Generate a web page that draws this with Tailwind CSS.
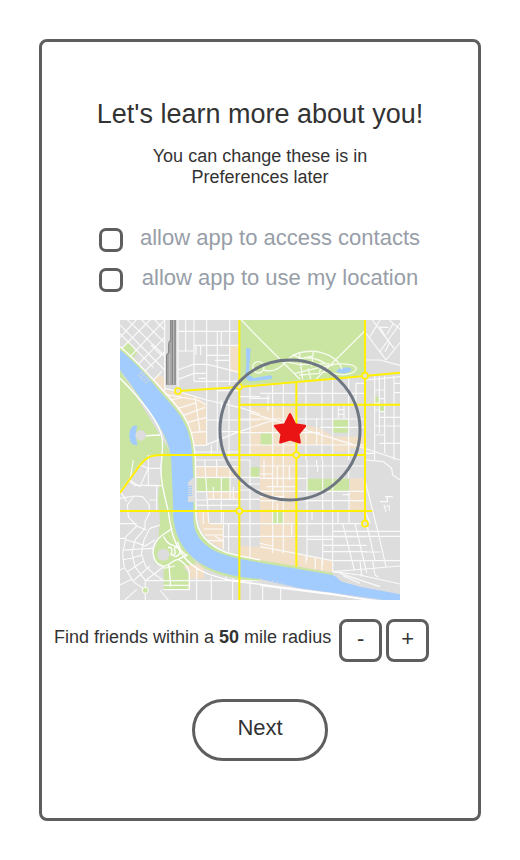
<!DOCTYPE html>
<html lang="en">
<head>
<meta charset="utf-8">
<meta name="viewport" content="width=device-width, initial-scale=1">
<title>Let's learn more about you!</title>
<script src="https://cdn.jsdelivr.net/npm/@tailwindcss/browser@4"></script>
</head>
<body class="min-h-screen flex bg-white p-[39px] font-['Liberation_Sans',Arial,sans-serif] text-[#333333]">
<main class="flex flex-1 flex-col items-center rounded-lg border-3 border-[#5e5e5e] pt-14">
  <h1 class="text-[27px] leading-8">Let's learn more about you!</h1>
  <p class="mt-4 max-w-60 text-center text-[18px] leading-[21px]">You can change these is in Preferences later</p>

  <form class="mt-[38px] flex flex-col gap-4 pl-0.5 text-[22px] leading-6 text-[#979ea8]">
    <div class="flex h-6 items-center gap-3.5">
      <input id="contacts" type="checkbox" class="mt-1 size-6 shrink-0 appearance-none rounded-[7px] border-3 border-[#5e5e5e] bg-white checked:bg-[#5e5e5e]">
      <label for="contacts" class="min-w-[286px] text-center">allow app to access contacts</label>
    </div>
    <div class="flex h-6 items-center gap-3.5">
      <input id="location" type="checkbox" class="mt-1 size-6 shrink-0 appearance-none rounded-[7px] border-3 border-[#5e5e5e] bg-white checked:bg-[#5e5e5e]">
      <label for="location" class="min-w-[286px] text-center">allow app to use my location</label>
    </div>
  </form>

  <svg class="mt-[30px] size-[280px]" viewBox="0 0 840 840" fill="none" role="img" aria-label="Map with a search radius around your location">
    <rect width="840" height="840" fill="#dddddd"/>
    <!-- built-up areas -->
    <g fill="#f2dfc7">
      <path d="M98 183L118 162L134 176V210L232 232L258 252V376H222L190 300L150 250Z"/>
      <path d="M328 77H356V155H328Z"/>
      <path d="M390 262H530V310L600 325L640 350H735V385H690V395H640V375H530V735L420 718V405H390Z"/>
      <path d="M226 440H358V472H226ZM265 515H358V538H265ZM230 575H266L268 611H310V688L275 668L245 635ZM358 677L420 682V730L358 716ZM420 685L637 722V757L530 740L420 725ZM690 475H735V572H690ZM203 718L252 742V776H208V755L190 738Z"/>
    </g>
    <!-- parks -->
    <g fill="#cae5a2">
      <path d="M358 0H735V166L358 196Z"/>
      <path d="M22 64L52 98L36 118L4 86Z"/>
      <path d="M0 150L153 400V420L165 600L200 690L230 730L190 740L207 762V809H131V740L105 730L98 700L115 655L120 600L114 540L125 440V405H90L60 428L0 510Z"/>
      <path d="M230 475H330V514H230ZM422 340H455V375H422ZM390 442H418V471H390ZM638 299H687V338H638ZM561 476H687V514H561ZM458 573H490V609H458ZM764 230H777V250H764ZM780 252H794V275H780Z"/>
    </g>
    <!-- streets, north-west -->
    <g stroke="#fafafa" stroke-width="3.5">
      <path d="M0 52L90 -45M0 90L115 -25M25 116L134 0M48 140L134 52M70 158L134 96M98 183L125 154M15 -8L134 108M-10 5L134 150M-5 36L100 142M55 -10L134 68M95 -10L134 30M93 75L125 107"/>
      <path d="M134 0V212M174 0V212M197 0V92M222 0V184M260 0V376M292 35V392M329 0V195M174 34H358M174 93H220M222 76H358M260 106H328M285 121H328M242 78V105M228 78V105M304 35V75M174 150L220 133H262L358 157M174 178L222 160H260M236 175H260M222 184H356"/>
      <path d="M134 205L175 215L260 240L358 262L420 282M134 223L232 240L260 255M165 268L230 248M180 290L255 262M192 310L260 292M225 232L240 335M205 338L260 335M150 240L190 232M215 376H260M260 374L358 335L455 302M292 335H358M260 300H358M304 240V375M327 240V420M390 196V405M292 212H358M358 230H420M358 300L420 300"/>
    </g>
    <!-- streets, north-east -->
    <g stroke="#fafafa" stroke-width="3.5">
      <path d="M458 190V420M490 188V420M558 180V420M606 178V420M638 176V420M686 172V420M420 220H735M358 297H735M358 375H735M358 338H600M600 322H735M708 190V254M708 190H735M655 254V295M672 254V295M655 269H672M655 283H672M390 278L540 325L700 374L840 420M444 225V273M390 235H450M590 295V375"/>
      <path d="M737 120H780L840 136M732 32L798 120L780 95L840 10M750 50L780 0M757 0L822 85M778 18L808 70L795 95M798 120L840 68M780 22H805M808 0L840 28M800 45L820 10"/>
      <path d="M764 168V420M778 168V340M794 168V400M822 168V420M740 180L840 170M764 210H794M764 250H778M778 236H794M778 275H794M778 292H840M764 318H840M764 345H794M778 370H840M735 400H764M822 190H840M822 218H840M764 270H778"/>
    </g>
    <!-- streets, south-west -->
    <g stroke="#fafafa" stroke-width="3.5">
      <path d="M222 396H358M220 420H390M274 376V405M222 440H358M226 472H420M254 420L266 608M290 420V475M304 472V611M330 440V538M264 515H358M226 515H264M264 538H420M280 500V538M310 572V688M340 500V540M228 540H264M230 556H358M250 627H310M256 645H310M265 662H310M268 611H420M284 648L310 664M310 650H420M326 611V695M390 420V730M250 575V611M358 510H420M358 492H420M274 770V840M318 770V782M340 770V780M76 782H420M230 740V840M338 782V840M390 775V840"/>
      <path d="M40 420L30 480L60 500L85 445M85 405V497L125 497M60 435L85 445H122M42 528L0 535M42 528L22 555L25 590L50 618L80 630M42 528L68 530L88 555V580L75 605V625M28 484L45 496H115M110 496V570M88 540H113M0 512L20 545M0 611H50M50 618L18 650L8 700L12 740L40 785L76 810M75 625L45 660L36 700L45 740L76 782M120 615L90 625L72 660L64 700L76 738L100 760M0 655H18M18 660L50 668L75 678L105 660M8 690L100 685M8 720L64 706M22 755L72 722M38 784L90 738M76 782L131 740M0 750L12 745M0 795L35 778M76 782V840M100 760L131 782M120 810L145 840M15 840L50 808M130 809H208M131 796H207M131 745L165 738"/>
    </g>
    <!-- streets, south-east -->
    <g stroke="#fafafa" stroke-width="3.5">
      <path d="M458 420V700M490 420V700M561 420V720M608 420V735M638 420V755M686 440V475M687 514V611M420 438H735M420 475H561M420 514H735M420 542H735M420 611H735M420 649H840M432 420V475M472 440V500M508 440V480M420 462H460M440 500H490M420 530H490M458 500H527M472 550V612M590 420V440M593 440V455M576 572V600M654 572V611M668 524H690M515 611V645M561 650H735M638 634H840M561 658H638M608 676H740M608 695H740M638 722H840"/>
      <path d="M420 680L527 700L637 722M420 670L458 678M558 705V730M586 710V748M606 714V750M735 482L750 540L775 640L798 740M668 611L703 750M705 611L740 758M740 611L765 722M735 696H782M735 572L750 610M735 420L790 425L815 445L818 465L840 480M780 545H802V530H818M795 530H812M792 555L798 575M798 558H808V572M637 755L700 750L840 738M637 755L720 765L840 792M660 760L780 800M720 725L725 770M758 722L765 765L775 772M670 768L720 790"/>
      <path d="M420 797L840 850M428 797V840M482 800V840"/>
    </g>
    <!-- river -->
    <path d="M0 81L60 138L100 183L155 246L197 298L219 350L226 420L228 600L242 635L270 669L314 695L360 709L420 721L530 739L640 760V775L370 752L290 720L220 650L205 560L200 420L0 110Z" fill="#cae5a2"/>
    <path d="M0 148L50 215L125 330L152 400L159 580L178 658L205 700L250 743L300 764L360 778L420 782V768L240 720L180 620L170 400Z" fill="#cae5a2"/>
    <path d="M0 90C60 140 90 180 150 250C195 300 216 345 217 420L220 480V600C224 655 260 686 310 703C345 715 380 721 420 728L530 746L637 765C650 768 655 780 668 786L720 800L840 823V840H790L700 827L540 805L420 777C340 772 290 756 250 735C185 695 160 640 160 575L154 420C150 380 137 347 110 305C75 255 40 200 0 150Z" fill="#a2cbfe"/>
    <!-- riverside paths -->
    <g stroke="#fff" stroke-width="4">
      <path d="M0 175C45 220 85 265 110 310C133 350 128 380 125 420C116 470 135 530 145 575C152 630 162 670 190 708C225 755 280 770 340 783C450 795 550 812 640 822L840 858"/>
      <path d="M0 80C60 130 100 180 155 240C205 295 222 340 226 420L228 590C232 650 275 680 320 698C360 709 400 716 420 720"/>
      <path d="M157 625L128 645C105 660 98 680 99 700C102 722 115 736 131 739C150 737 155 720 175 718C190 725 210 745 208 762V809M130 650L142 667C155 680 175 675 180 690C182 705 170 712 160 708M172 665L182 690L200 708M175 718L203 704M147 735L152 800"/>
      <path d="M145 685C150 675 160 690 155 698C147 710 170 706 165 694C160 680 170 676 172 686"/>
      <path d="M62 348L120 345"/>
    </g>
    <!-- piers -->
    <path d="M218 474H226V546H204V528H216V495H204V488Z" fill="#dddddd"/>
    <path d="M204 496H218M204 503H218M204 510H218M204 517H218M204 524H218" stroke="#dddddd" stroke-width="3"/>
    <path d="M60 155L88 182M54 164L78 188M68 151L54 168M76 158L60 176M84 168L68 184M90 176L76 192M420 776L424 772M458 790V780M472 793V782M486 796V784" stroke="#cdd6e4" stroke-width="3"/>
    <!-- ponds -->
    <path d="M52 318C40 312 28 325 28 345C28 368 40 380 53 374C48 360 45 338 52 318Z" fill="#a2cbfe"/>
    <circle cx="62" cy="346" r="16" fill="#dddddd"/>
    <circle cx="130" cy="704" r="18" fill="#dddddd"/>
    <circle cx="76" cy="811" r="9" fill="#cae5a2" stroke="#fff" stroke-width="3"/>
    <path d="M378 88C380 82 391 82 392 90C391 108 387 145 388 166L402 174L450 166C459 168 458 176 450 178L395 184C376 186 374 165 378 145C381 120 377 105 378 88Z" fill="#a2cbfe"/>
    <path d="M648 155C655 143 675 141 692 144C698 152 687 160 665 160Z" fill="#a2cbfe"/>
    <!-- park paths -->
    <g stroke="#f6faee" stroke-width="4">
      <circle cx="415" cy="142" r="17"/>
      <path d="M422 60L540 178M364 0L422 60M735 32L588 178M432 150C455 158 480 148 505 118C530 92 575 90 605 98C635 106 660 125 666 148M600 160C590 135 655 128 690 134C720 140 712 158 680 163C650 170 630 150 604 158M495 125L540 134L628 131M520 122C550 108 590 112 615 130M538 98L548 178M580 94L575 140M518 105L545 115L580 108M525 160L600 142L640 135M538 165L600 160M565 145L572 178"/>
    </g>
    <!-- rail yard -->
    <path d="M152 0H168V195H138V104L146 96V64L152 58Z" fill="#a7a7a7"/>
    <path d="M152 0V62L146 70V98L140 106V194M158 0V194M165 0V194" stroke="#7f7f7f" stroke-width="3"/>
    <path d="M149 100V190M161 0V194" stroke="#c9c9c9" stroke-width="2"/>
    <!-- main roads -->
    <g stroke="#fff000" stroke-width="6">
      <path d="M174 213L358 201L735 168L840 158M358 0V840M735 0V600M358 254H840M529 184V740M0 573H757M0 519L60 435C80 412 90 405 125 405H735"/>
      <g fill="#e6e3cf" stroke-width="5">
        <circle cx="174" cy="213" r="9"/>
        <circle cx="358" cy="200" r="8"/>
        <circle cx="735" cy="167" r="9"/>
        <circle cx="529" cy="405" r="9"/>
        <circle cx="358" cy="573" r="9"/>
        <circle cx="735" cy="611" r="9"/>
      </g>
    </g>
    <!-- search radius and current position -->
    <circle cx="510" cy="330" r="210" stroke="#6e7681" stroke-width="9"/>
    <path d="M510 283L525 313L555 318L535 342L539 367L510 358L481 367L485 342L465 318L495 313Z" fill="#eb1414" stroke="#eb1414" stroke-width="7" stroke-linejoin="round"/>
  </svg>

  <div class="mt-[19px] flex items-center gap-2 self-start pl-3">
    <p id="radius" class="pb-2 text-[18px] leading-6">Find friends within a <b>50</b> mile radius</p>
    <div class="flex gap-1" role="group" aria-labelledby="radius">
      <button type="button" aria-label="Decrease radius" class="size-[43px] rounded-lg border-3 border-[#5e5e5e] pb-1 text-[22px] leading-6">-</button>
      <button type="button" aria-label="Increase radius" class="size-[43px] rounded-lg border-3 border-[#5e5e5e] pb-1 text-[22px] leading-6">+</button>
    </div>
  </div>

  <button type="button" class="mt-[37px] h-[62px] w-[136px] rounded-full border-3 border-[#5e5e5e] pb-1 text-[22px] leading-6">Next</button>
</main>
</body>
</html>
